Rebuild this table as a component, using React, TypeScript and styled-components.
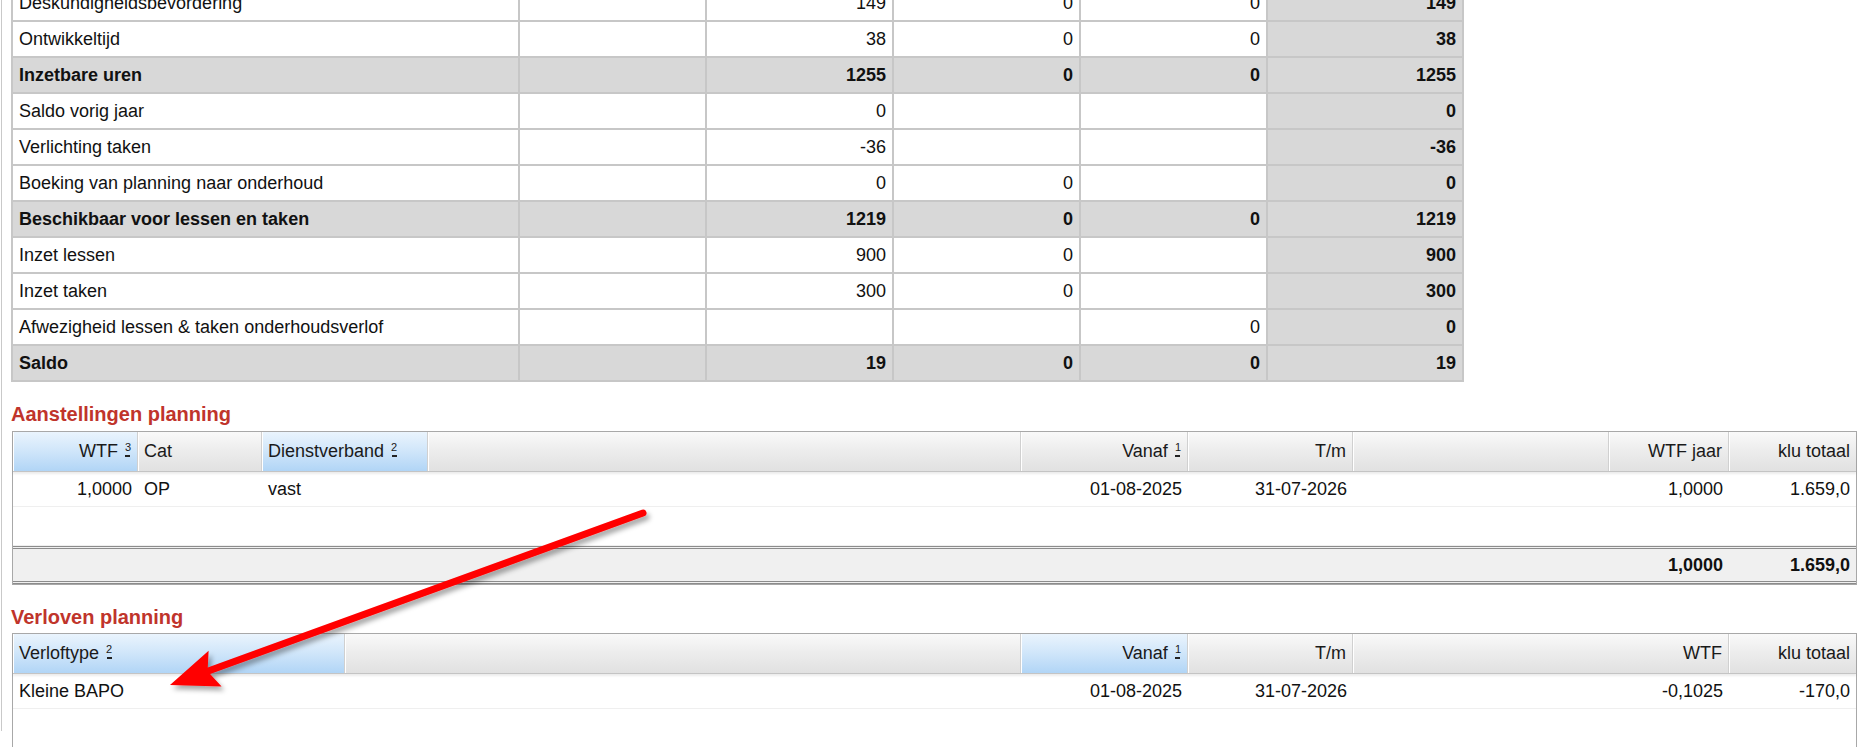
import React from 'react';
import styled, { createGlobalStyle } from 'styled-components';

const GlobalStyle = createGlobalStyle`
  *, *::before, *::after { box-sizing: border-box; }
  html, body { margin: 0; padding: 0; background: #fff; }
  body {
    font-family: "Liberation Sans", Arial, sans-serif;
    color: #111;
    overflow: hidden;
  }
`;

const Root = styled.div`
  position: relative;
  width: 1866px;
  height: 747px;
  overflow: hidden;
`;

const Page = styled.div`
  margin-left: 1px;
  border-left: 1px solid #c9c9c9;
  padding: 0 9px;
  height: 747px;
`;

/* ---------- summary table ---------- */

const SummaryTable = styled.table`
  border-collapse: collapse;
  table-layout: fixed;
  width: 1451px;
  margin-top: -16px;
  font-size: 18px;
  border-left: 2px solid #b2b2b2;
  border-right: 2px solid #b2b2b2;
  border-bottom: 2px solid #b2b2b2;
`;

const SummaryRow = styled.tr<{ $total?: boolean }>`
  background: ${(p) => (p.$total ? '#d8d8d8' : '#fff')};
  font-weight: ${(p) => (p.$total ? 'bold' : 'normal')};
`;

const SummaryCell = styled.td<{ $num?: boolean; $sum?: boolean }>`
  height: 36px;
  padding: 0 6px 0 6px;
  border: 2px solid #c7c7c7;
  text-align: ${(p) => (p.$num ? 'right' : 'left')};
  vertical-align: middle;
  white-space: nowrap;
  color: #111;
  background: ${(p) => (p.$sum ? '#d8d8d8' : 'transparent')};
  font-weight: ${(p) => (p.$sum ? 'bold' : 'inherit')};
`;

/* ---------- sections ---------- */

const SectionTitle = styled.h2<{ $gapBelow: number }>`
  margin: 20px 0 ${(p) => p.$gapBelow}px 0;
  font-size: 20px;
  line-height: 24px;
  font-weight: bold;
  color: #c0342b;
`;

const GridBox = styled.div`
  margin-left: 1px;
  border: 1px solid #a8a8a8;
  background: #fff;
`;

const GridRow = styled.div<{ $cols: string }>`
  display: grid;
  grid-template-columns: ${(p) => p.$cols};
`;

const HeaderRow = styled(GridRow)`
  height: 40px;
  border-bottom: 1px solid #c4c4c4;
  box-shadow: 0 2px 2px rgba(0, 0, 0, 0.08);
  position: relative;
`;

const HeaderCell = styled.div<{ $active?: boolean; $right?: boolean; $last?: boolean }>`
  display: flex;
  align-items: center;
  justify-content: ${(p) => (p.$right ? 'flex-end' : 'flex-start')};
  padding: 0 6px;
  font-size: 18px;
  color: #1a1a1a;
  white-space: nowrap;
  background: ${(p) =>
    p.$active
      ? 'linear-gradient(#eaf4fd, #d2e7fa 45%, #b1d5f6)'
      : 'linear-gradient(#f9f9f9, #ececec 50%, #e1e1e1)'};
  border-right: ${(p) => (p.$last ? 'none' : '1px solid #d0d0d0')};
  box-shadow: inset 1px 0 0 #ffffff;
`;

const SortMark = styled.span`
  display: inline-flex;
  flex-direction: column;
  align-items: center;
  margin-left: 7px;
  font-size: 11px;
  line-height: 10px;
  position: relative;
  top: -2px;
  &::after {
    content: '';
    width: 5px;
    height: 2px;
    background: #222;
    margin-top: 3px;
  }
`;

const DataRow = styled(GridRow)<{ $height: number }>`
  height: ${(p) => p.$height}px;
  border-bottom: 1px solid #efefef;
`;

const FooterRow = styled(GridRow)`
  height: 38px;
  background: #f0f0f0;
  border-top: 3px double #8c8c8c;
  border-bottom: 3px double #8c8c8c;
  font-weight: bold;
`;

const DataCell = styled.div<{ $right?: boolean }>`
  display: flex;
  align-items: center;
  justify-content: ${(p) => (p.$right ? 'flex-end' : 'flex-start')};
  padding: 0 6px;
  font-size: 18px;
  color: #111;
  white-space: nowrap;
`;

/* ---------- annotation arrow ---------- */

const ArrowLayer = styled.svg`
  position: absolute;
  left: 0;
  top: 0;
  pointer-events: none;
  overflow: visible;
`;

/* ---------- data ---------- */

type SummaryItem = { label: string; v: [string, string, string]; t: string; total?: boolean };

const summary: SummaryItem[] = [
  { label: 'Deskundigheidsbevordering', v: ['149', '0', '0'], t: '149' },
  { label: 'Ontwikkeltijd', v: ['38', '0', '0'], t: '38' },
  { label: 'Inzetbare uren', v: ['1255', '0', '0'], t: '1255', total: true },
  { label: 'Saldo vorig jaar', v: ['0', '', ''], t: '0' },
  { label: 'Verlichting taken', v: ['-36', '', ''], t: '-36' },
  { label: 'Boeking van planning naar onderhoud', v: ['0', '0', ''], t: '0' },
  { label: 'Beschikbaar voor lessen en taken', v: ['1219', '0', '0'], t: '1219', total: true },
  { label: 'Inzet lessen', v: ['900', '0', ''], t: '900' },
  { label: 'Inzet taken', v: ['300', '0', ''], t: '300' },
  { label: 'Afwezigheid lessen & taken onderhoudsverlof', v: ['', '', '0'], t: '0' },
  { label: 'Saldo', v: ['19', '0', '0'], t: '19', total: true },
];

type Col = { title: string; right?: boolean; active?: boolean; sort?: number };

const aanstCols = '125px 124px 166px 593px 167px 165px 256px 120px 1fr';
const aanstHead: Col[] = [
  { title: 'WTF', right: true, active: true, sort: 3 },
  { title: 'Cat' },
  { title: 'Dienstverband', active: true, sort: 2 },
  { title: '' },
  { title: 'Vanaf', right: true, sort: 1 },
  { title: 'T/m', right: true },
  { title: '' },
  { title: 'WTF jaar', right: true },
  { title: 'klu totaal', right: true },
];
const aanstRow = ['1,0000', 'OP', 'vast', '', '01-08-2025', '31-07-2026', '', '1,0000', '1.659,0'];
const aanstFoot = ['', '', '', '', '', '', '', '1,0000', '1.659,0'];

const verlCols = '332px 676px 167px 165px 376px 1fr';
const verlHead: Col[] = [
  { title: 'Verloftype', active: true, sort: 2 },
  { title: '' },
  { title: 'Vanaf', right: true, active: true, sort: 1 },
  { title: 'T/m', right: true },
  { title: 'WTF', right: true },
  { title: 'klu totaal', right: true },
];
const verlRow = ['Kleine BAPO', '', '01-08-2025', '31-07-2026', '-0,1025', '-170,0'];

const Header = ({ cols, template }: { cols: Col[]; template: string }) => (
  <HeaderRow $cols={template}>
    {cols.map((c, i) => (
      <HeaderCell key={i} $active={c.active} $right={c.right} $last={i === cols.length - 1}>
        {c.title}
        {c.sort !== undefined && <SortMark>{c.sort}</SortMark>}
      </HeaderCell>
    ))}
  </HeaderRow>
);

const Cells = ({ values, cols }: { values: string[]; cols: Col[] }) => (
  <>
    {values.map((v, i) => (
      <DataCell key={i} $right={cols[i].right}>
        {v}
      </DataCell>
    ))}
  </>
);

// arrow geometry (tail -> tip)
const tail = { x: 643, y: 513 };
const tip = { x: 170, y: 685 };
const dx = tip.x - tail.x;
const dy = tip.y - tail.y;
const len = Math.hypot(dx, dy);
const ux = dx / len;
const uy = dy / len;
const headLen = 48;
const headHalf = 19;
const base = { x: tip.x - ux * headLen, y: tip.y - uy * headLen };
const notch = { x: tip.x - ux * (headLen - 8), y: tip.y - uy * (headLen - 8) };
const c1 = { x: base.x - uy * headHalf, y: base.y + ux * headHalf };
const c2 = { x: base.x + uy * headHalf, y: base.y - ux * headHalf };

export default function App() {
  return (
    <Root>
      <GlobalStyle />
      <Page>
        <SummaryTable>
          <colgroup>
            <col style={{ width: 507 }} />
            <col style={{ width: 187 }} />
            <col style={{ width: 187 }} />
            <col style={{ width: 187 }} />
            <col style={{ width: 187 }} />
            <col style={{ width: 196 }} />
          </colgroup>
          <tbody>
            {summary.map((r) => (
              <SummaryRow key={r.label} $total={r.total}>
                <SummaryCell>{r.label}</SummaryCell>
                <SummaryCell />
                {r.v.map((v, i) => (
                  <SummaryCell key={i} $num>
                    {v}
                  </SummaryCell>
                ))}
                <SummaryCell $num $sum>
                  {r.t}
                </SummaryCell>
              </SummaryRow>
            ))}
          </tbody>
        </SummaryTable>

        <SectionTitle $gapBelow={5}>Aanstellingen planning</SectionTitle>
        <GridBox>
          <Header cols={aanstHead} template={aanstCols} />
          <DataRow $cols={aanstCols} $height={35}>
            <Cells values={aanstRow} cols={aanstHead} />
          </DataRow>
          <DataRow $cols={aanstCols} $height={39} />
          <FooterRow $cols={aanstCols}>
            <Cells values={aanstFoot} cols={aanstHead} />
          </FooterRow>
        </GridBox>

        <SectionTitle $gapBelow={4}>Verloven planning</SectionTitle>
        <GridBox>
          <Header cols={verlHead} template={verlCols} />
          <DataRow $cols={verlCols} $height={35}>
            <Cells values={verlRow} cols={verlHead} />
          </DataRow>
          <DataRow $cols={verlCols} $height={40} />
        </GridBox>
      </Page>

      <ArrowLayer width={1866} height={747} viewBox="0 0 1866 747">
        <defs>
          <filter id="arrowShadow" x="-20%" y="-20%" width="140%" height="140%">
            <feDropShadow dx="3" dy="4" stdDeviation="2.5" floodColor="#000" floodOpacity="0.35" />
          </filter>
        </defs>
        <g filter="url(#arrowShadow)">
          <line
            x1={tail.x}
            y1={tail.y}
            x2={notch.x}
            y2={notch.y}
            stroke="#ff0000"
            strokeWidth={7}
            strokeLinecap="round"
          />
          <polygon
            points={`${tip.x},${tip.y} ${c1.x},${c1.y} ${notch.x},${notch.y} ${c2.x},${c2.y}`}
            fill="#ff0000"
          />
        </g>
      </ArrowLayer>
    </Root>
  );
}
